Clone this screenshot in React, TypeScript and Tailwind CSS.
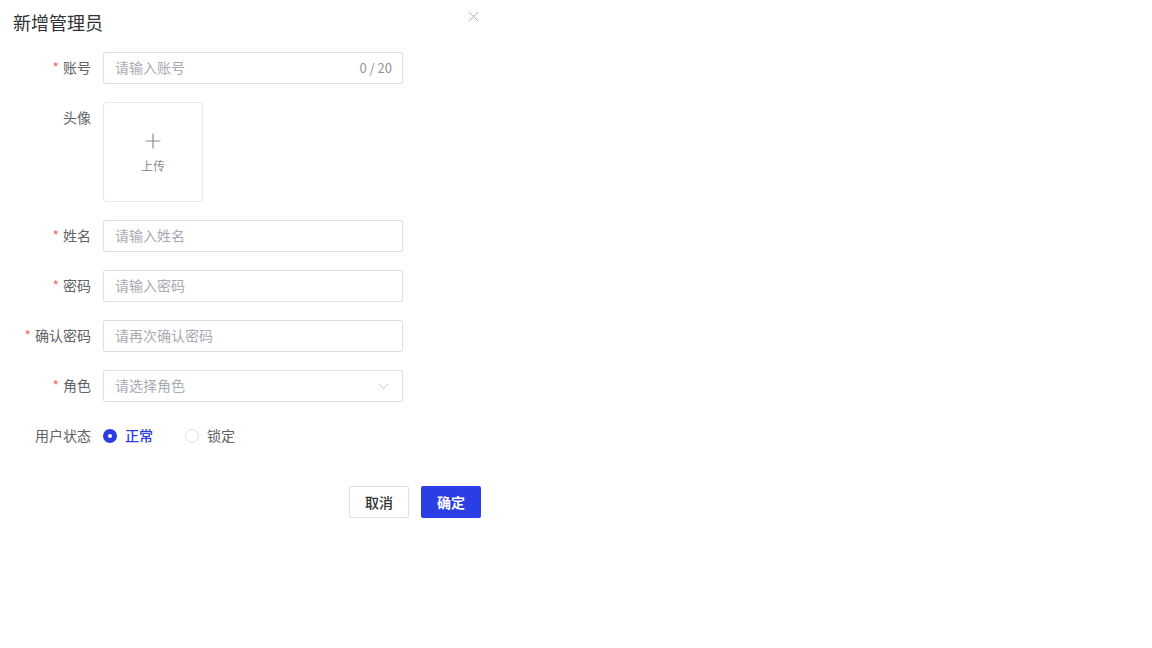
import React from 'react';
import { X, Plus, ChevronDown } from 'lucide-react';

const font = { fontFamily: '"Noto Sans CJK SC", "Noto Sans", sans-serif' };

const Label: React.FC<{ text: string; required?: boolean }> = ({ text, required }) => (
  <div className="w-[91px] shrink-0 h-8 flex items-center justify-end text-sm leading-none text-[#606266] pb-[2px]">
    {required && <span className="text-[#f56c6c] mr-1">*</span>}
    {text}
  </div>
);

const TextInput: React.FC<{ placeholder: string; suffix?: string }> = ({ placeholder, suffix }) => (
  <div className="w-[300px] h-8 border border-[#dcdfe6] rounded-[2px] flex items-center pl-[11px] pr-[10px] text-sm leading-none pb-[2px]">
    <span className="flex-1 text-[#a8abb2]">{placeholder}</span>
    {suffix && <span className="text-[13px] text-[#909399]">{suffix}</span>}
  </div>
);

export default function App() {
  return (
    <div className="w-[1152px] h-[648px] bg-white relative" style={font}>
      <div className="w-[500px] pl-[13px] pr-[19px] pt-[10px]">
        <div className="flex items-start justify-between">
          <h1 className="text-lg leading-6 text-[#303133]">新增管理员</h1>
          <X size={17} strokeWidth={1} className="text-[#909399] mt-[-2px] mr-[-1px]" />
        </div>

        <div className="mt-[18px] -ml-[13px] flex flex-col gap-[18px]">
          <div className="flex items-center gap-3">
            <Label text="账号" required />
            <TextInput placeholder="请输入账号" suffix="0 / 20" />
          </div>

          <div className="flex items-start gap-3">
            <Label text="头像" />
            <div className="w-[100px] h-[100px] border border-[#e4e7ed] rounded-[4px] flex flex-col items-center justify-center text-[#8c8c8c]">
              <Plus size={24} strokeWidth={1.2} className="mt-[-2px]" />
              <span className="text-xs mt-[5px]">上传</span>
            </div>
          </div>

          <div className="flex items-center gap-3">
            <Label text="姓名" required />
            <TextInput placeholder="请输入姓名" />
          </div>

          <div className="flex items-center gap-3">
            <Label text="密码" required />
            <TextInput placeholder="请输入密码" />
          </div>

          <div className="flex items-center gap-3">
            <Label text="确认密码" required />
            <TextInput placeholder="请再次确认密码" />
          </div>

          <div className="flex items-center gap-3">
            <Label text="角色" required />
            <div className="w-[300px] h-8 border border-[#dcdfe6] rounded-[2px] flex items-center pl-[11px] pr-[10px] text-sm leading-none pb-[2px]">
              <span className="flex-1 text-[#a8abb2]">请选择角色</span>
              <ChevronDown size={17} strokeWidth={1} className="text-[#b0b3b8] mt-[2px]" />
            </div>
          </div>

          <div className="flex items-center gap-3">
            <Label text="用户状态" />
            <div className="flex items-center text-sm leading-none pb-[2px]">
              <span className="w-[14px] h-[14px] rounded-full bg-[#2b3de5] flex items-center justify-center mt-[2px]">
                <span className="w-1 h-1 rounded-full bg-white" />
              </span>
              <span className="ml-2 text-[#2b3de5] font-medium">正常</span>
              <span className="ml-8 w-[14px] h-[14px] rounded-full border border-[#dcdfe6] mt-[2px]" />
              <span className="ml-2 text-[#606266]">锁定</span>
            </div>
          </div>
        </div>

        <div className="mt-[34px] flex justify-end gap-3">
          <button className="w-[60px] h-8 border border-[#dcdfe6] rounded-[2px] text-sm font-medium text-[#303133]">
            取消
          </button>
          <button className="w-[60px] h-8 bg-[#2b3de5] rounded-[2px] text-sm font-bold text-white">
            确定
          </button>
        </div>
      </div>
    </div>
  );
}
